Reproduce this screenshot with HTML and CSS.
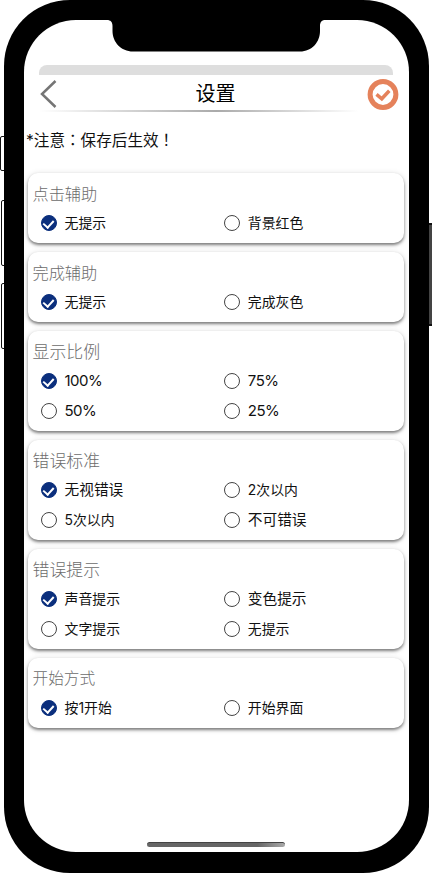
FILE: index.html
```
<!DOCTYPE html>
<html lang="zh-CN">
<head>
  <meta charset="UTF-8" />
  <meta name="viewport" content="width=device-width, initial-scale=1.0" />
  <title>设置</title>
  <link rel="stylesheet" href="styles.css">
</head>
<body>
<!-- 侧边按键 -->
<span class="side-key mute"></span>
<span class="side-key vol-up"></span>
<span class="side-key vol-down"></span>
<span class="side-key power"></span>

<div class="phone">
  <svg class="notch" width="218" height="32" viewBox="0 0 218 32">
    <path d="M0 0H218C215 0 213 2 213 6V11C213 22 205 31.5 193 31.5H26C14 31.5 5.500 22 5.500 11V6C5.500 2 3.500 0 0 0Z" />
  </svg>
  <div class="screen">
    <div class="sheet-edge"></div>
    <header class="top-bar">
      <svg class="back" width="17" height="28" viewBox="0 0 17 28">
        <path d="M15.500 1L2 14L15.500 27" />
      </svg>
      <h1>设置</h1>
      <svg class="save" width="32" height="32" viewBox="0 0 32 32">
        <circle cx="16" cy="16.500" r="12.900" />
        <path d="M9.500 16.300L14.800 20.800L22.300 12.800" />
      </svg>
    </header>
    <p class="notice" lang="zh-TW">*注意：<span lang="zh-CN">保存后生效</span>！</p>

    <main class="settings">
      <section class="card">
        <h2>点击辅助</h2>
        <div class="options">
          <label class="option checked"><i class="radio"></i>无提示</label>
          <label class="option"><i class="radio"></i>背景红色</label>
        </div>
      </section>
      <section class="card">
        <h2>完成辅助</h2>
        <div class="options">
          <label class="option checked"><i class="radio"></i>无提示</label>
          <label class="option"><i class="radio"></i>完成灰色</label>
        </div>
      </section>
      <section class="card tall">
        <h2 class="wide">显示比例</h2>
        <div class="options">
          <label class="option number checked"><i class="radio"></i>100%</label>
          <label class="option number"><i class="radio"></i>75%</label>
          <label class="option number"><i class="radio"></i>50%</label>
          <label class="option number"><i class="radio"></i>25%</label>
        </div>
      </section>
      <section class="card tall">
        <h2 class="wide">错误标准</h2>
        <div class="options">
          <label class="option wide checked"><i class="radio"></i>无视错误</label>
          <label class="option"><i class="radio"></i>2次以内</label>
          <label class="option"><i class="radio"></i>5次以内</label>
          <label class="option wide"><i class="radio"></i>不可错误</label>
        </div>
      </section>
      <section class="card tall">
        <h2 class="wide">错误提示</h2>
        <div class="options">
          <label class="option checked"><i class="radio"></i>声音提示</label>
          <label class="option wide"><i class="radio"></i>变色提示</label>
          <label class="option"><i class="radio"></i>文字提示</label>
          <label class="option"><i class="radio"></i>无提示</label>
        </div>
      </section>
      <section class="card">
        <h2 class="narrow">开始方式</h2>
        <div class="options">
          <label class="option checked"><i class="radio"></i>按1开始</label>
          <label class="option"><i class="radio"></i>开始界面</label>
        </div>
      </section>
    </main>
    <div class="home-bar"></div>
  </div>
</div>
</body>
</html>
```
FILE: styles.css
```
* {
  box-sizing: border-box;
}
body {
  margin: 0;
  height: 873px;
  padding: 0 4px;
  overflow: hidden;
  position: relative;
  background: #fff;
  color: #111;
  font-family: Inter, "Noto Sans CJK SC", sans-serif;
}
h1, h2, p {
  margin: 0;
  font-weight: 400;
}
.phone {
  position: relative;
  height: 873px;
  width: 424.500px;
  padding: 20px 20px 21px;
  background: #000;
  border-radius: 66px;
}
.notch {
  position: absolute;
  z-index: 1;
  left: 103px;
  top: 20px;
}
.screen {
  height: 832px;
  width: 385px;
  display: flex;
  flex-direction: column;
  background: #fff;
  border-radius: 52px;
  padding-top: 45px;
}

/* 手机侧键 */
.side-key {
  position: absolute;
  width: 5px;
  left: 1px;
  background: #fff;
  border: 1px solid #111;
  border-radius: 2px 0 0 2px;
}
.mute {
  left: 0;
  top: 136px;
  height: 35px;
}
.vol-up {
  top: 200px;
  height: 66px;
}
.vol-down {
  top: 283px;
  height: 66px;
}
.power {
  left: 427px;
  top: 223px;
  height: 103px;
  background: #444;
  border: solid #111;
  border-width: 2px 0 2px 1px;
  border-radius: 0;
}

/* 顶部栏 */
.sheet-edge {
  height: 10px;
  margin: 0 16px 0 15px;
  background: #dedede;
  border-radius: 8px 8px 0 0;
}
.top-bar {
  position: relative;
  height: 37px;
  display: flex;
  align-items: center;
  justify-content: space-between;
  padding: 1px 10px 0 16px;
}
.top-bar::after {
  content: "";
  position: absolute;
  left: 15px;
  right: 15px;
  bottom: 0;
  height: 2px;
  background: linear-gradient(90deg, #fff, #aaa 50%, rgba(255, 255, 255, 0) 90%);
}
.top-bar h1 {
  font-size: 20px;
  line-height: 30px;
  color: #000;
  padding-left: 7px;
}
.back {
  fill: none;
  stroke: #757575;
  stroke-width: 2.500;
}
.save {
  fill: none;
  stroke: #e5825b;
}
.save circle {
  stroke-width: 5;
}
.save path {
  stroke-width: 3.500;
}
.notice {
  height: 61px;
  padding: 15px 0 0 2px;
  font-family: Inter, "Noto Sans CJK TC", sans-serif;
  font-size: 15.600px;
  line-height: 24px;
}
.notice span {
  font-family: "Noto Sans CJK SC", sans-serif;
}

/* 设置卡片 */
.settings {
  display: flex;
  flex-direction: column;
  gap: 9.600px;
  padding: 0 5px 0 4px;
}
.card {
  height: 69.600px;
  padding: 9px 6px 0 4.500px;
  background: #fff;
  border-radius: 10px;
  box-shadow: 0 2px 3px rgba(0, 0, 0, 0.45), 0 1px 6px rgba(0, 0, 0, 0.15);
}
.card.tall {
  height: 99.400px;
}
.card h2 {
  font-size: 16.200px;
  line-height: 24px;
  color: #6c6c6c;
  font-weight: 300;
}
.card h2.wide {
  font-size: 16.900px;
}
.card h2.narrow {
  font-size: 15.700px;
}
.options {
  display: grid;
  grid-template-columns: 183.300px 1fr;
  grid-auto-rows: 29.800px;
  padding: 2px 0 0 8px;
}
.option {
  display: flex;
  align-items: center;
  gap: 8px;
  font-size: 13.900px;
  line-height: 20px;
}
.option.wide {
  font-size: 14.700px;
}
.option.number {
  font-size: 15px;
  letter-spacing: -0.500px;
}
.radio {
  width: 16px;
  height: 16px;
  display: flex;
  justify-content: center;
  border: 1px solid #444;
  border-radius: 50%;
}
.checked .radio {
  background: #0b2f7d;
  border-color: #0b2f7d;
}
.checked .radio::after {
  content: "";
  width: 5px;
  height: 8px;
  margin-top: 2px;
  border: solid #fff;
  border-width: 0 2px 2px 0;
  transform: rotate(42deg);
}

.home-bar {
  width: 138px;
  height: 5px;
  margin: auto auto 5px 123px;
  border-radius: 3px;
  background: linear-gradient(90deg, #666 80%, #aaa);
  border-top: 1px solid #444;
}
```
